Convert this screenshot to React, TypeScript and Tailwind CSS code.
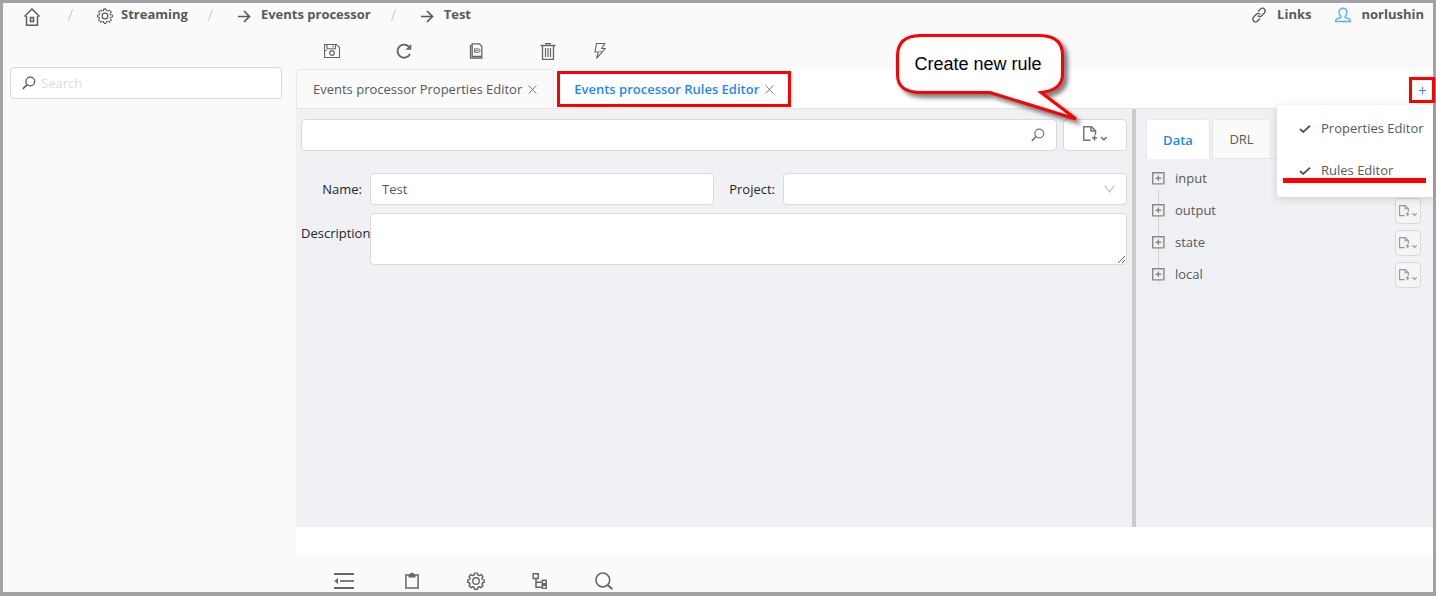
import type { ReactNode } from "react";

type DrawingProps = { className?: string; children: ReactNode; box?: string };

function Drawing({ className = "size-4", children, box = "0 0 16 16" }: DrawingProps) {
  return (
    <svg
      viewBox={box}
      className={`shrink-0 ${className}`}
      fill="none"
      stroke="currentColor"
      strokeWidth="1"
      aria-hidden="true"
    >
      {children}
    </svg>
  );
}

const HomeIcon = () => (
  <Drawing className="h-[18px] w-4" box="0 0 16 18">
    <path d="M.5 8.500 8 .9l7.500 7.600M2.500 8v9.300h11V8" strokeWidth="1.400" />
    <path d="M6.500 9.500h3v4h-3z" strokeWidth="1.500" />
  </Drawing>
);

const GEAR =
  "M6.700 1h2.600l.4 1.700 1.300.5 1.500-.9 1.700 1.700-.9 1.500.5 1.300 1.700.4v1.900l-1.700.4-.5 1.300.9 1.500-1.700 1.700-1.500-.9-1.300.5-.4 1.700H6.700l-.4-1.700-1.300-.5-1.500.9-1.700-1.700.9-1.500-.5-1.300L.6 9.100V7.200l1.600-.4.5-1.300-.9-1.500 1.700-1.700 1.500.9 1.300-.5z";

const GearIcon = ({ dashed = false, className = "size-4" }: { dashed?: boolean; className?: string }) => (
  <Drawing className={className}>
    <path d={GEAR} strokeWidth="1.300" strokeDasharray={dashed ? "2.200 .7" : undefined} strokeLinejoin="round" />
    <circle cx="8" cy="8" r="2.900" strokeWidth="1.200" />
  </Drawing>
);

const ArrowIcon = () => (
  <Drawing className="size-4">
    <path d="M1 8.500h11M7 3l5.500 5.500L7 14" strokeWidth="1.700" />
  </Drawing>
);

const LinkIcon = () => (
  <Drawing className="size-4">
    <path
      d="M7 4.500 9.500 2a2.600 2.600 0 0 1 4 .2c.9 1 .9 2.500 0 3.600L10.700 8.700a2.500 2.500 0 0 1-3.900-.2M9 11.500 6.500 14a2.600 2.600 0 0 1-4-.2c-.9-1-.9-2.500 0-3.600l2.800-2.900a2.500 2.500 0 0 1 3.900.2"
      strokeWidth="1.300"
    />
  </Drawing>
);

const UserIcon = () => (
  <Drawing className="size-4">
    <path
      d="M5.800 9.300C4.500 8.300 4 6.700 4 5.200 4 2.800 5.500 1.200 8 1.200s4 1.600 4 4c0 1.500-.5 3.100-1.800 4.100v1.200l4.300 1.700c.6.300.9.900.9 2.300H.6c0-1.400.3-2 .9-2.300l4.300-1.700z"
      strokeWidth="1.400"
    />
  </Drawing>
);

const SaveIcon = () => (
  <Drawing>
    <path d="M.6 1.500h11.900l3 3v10H.6zM3 1.500v4.200h8.500V1.500M9 2.500v2" strokeWidth="1.100" />
    <circle cx="8" cy="10" r="2.300" strokeWidth="1.200" />
    <path d="M.6 7.500h2" />
  </Drawing>
);

const ReloadIcon = () => (
  <Drawing>
    <path d="M13.300 4.300A6.500 6.500 0 1 0 14 10.800" strokeWidth="1.900" />
    <path d="M15.300 1v5.800H9.500z" fill="currentColor" stroke="none" />
  </Drawing>
);

const DocumentIcon = () => (
  <Drawing>
    <path d="M4.200.8h7.300l2.300 2.400v10.300H4.200zM4.200 2.700H2.500v12.500h11.300v-1.700" strokeWidth="1.300" />
    <path d="M6.500 5.800h3.800a1.800 1.800 0 0 1 0 3.600H6.500zM6 7.600h5" strokeWidth=".9" />
  </Drawing>
);

const TrashIcon = () => (
  <Drawing className="h-[17px] w-4" box="0 0 16 17">
    <path d="M.5 2.500h15M5 .6h6M2.500 3v13.400h11V3" strokeWidth="1.300" />
    <path d="M5.500 5v9M8 5v9M10.500 5v9" strokeWidth="1.200" />
  </Drawing>
);

const BoltIcon = () => (
  <Drawing className="h-[18px] w-3" box="0 0 12 18">
    <path d="M2.500 1.500h8.300L7.800 6.500h3.400L2.500 16.500 4.300 10H1z" strokeWidth="1.100" />
    <path d="M5 9.500h3.500L3.500 15" strokeWidth=".7" />
  </Drawing>
);

const CloseIcon = () => (
  <Drawing className="size-[9px]" box="0 0 9 9">
    <path d="m.7.500 7.600 8M8.300.5l-7.600 8" />
  </Drawing>
);

const LensIcon = ({ className = "size-4" }: { className?: string }) => (
  <Drawing className={className}>
    <circle cx="9.300" cy="6.500" r="4.400" strokeWidth="1.300" />
    <path d="m6.200 9.600-4.400 4.300" strokeWidth="1.500" />
  </Drawing>
);

const NewFileIcon = ({ className = "h-4 w-6" }: { className?: string }) => (
  <Drawing className={className} box="0 0 24 16">
    <path d="M7.500 14.200H.8V.8h7.700l4 4V9M8 .8V5h4.500" strokeWidth="1.500" />
    <path d="M11.500 9.500v5M9 12h5" strokeWidth="1.600" />
    <path d="m18 11 2.800 2.800 2.800-2.800" strokeWidth="1.600" />
  </Drawing>
);

const CheckIcon = () => (
  <Drawing className="size-3" box="0 0 12 12">
    <path d="m1 7 3.200 3L11 3.700" strokeWidth="1.900" />
  </Drawing>
);

const ExpandIcon = () => (
  <Drawing className="size-[13px]" box="0 0 13 13">
    <path d="M.7.700h11.200v11.200H.7z" fill="#f0f1f5" strokeWidth="1.400" />
    <path d="M6.300 3.500v5.600M3.500 6.300h5.600" strokeWidth="1.400" />
  </Drawing>
);

const OutdentIcon = () => (
  <Drawing className="h-[18px] w-5" box="0 0 20 18">
    <path d="M0 2h20M0 16h20" strokeWidth="2" />
    <path d="M6 9h14" strokeWidth="1.700" />
    <path d="M4 6v6L.3 9z" fill="currentColor" stroke="none" />
  </Drawing>
);

const ClipboardIcon = () => (
  <Drawing className="h-[18px] w-4" box="0 0 16 18">
    <path d="M1.900 3h12.200v13H1.900z" strokeWidth="1.500" />
    <path d="M4.500 2.500H6a2 2 0 0 1 4 0h1.500v3h-7z" fill="currentColor" stroke="none" />
  </Drawing>
);

const TreeIcon = () => (
  <Drawing>
    <path d="M1.200.8h5v4.700h-5zM4 5.500v8.700h6M4 9.200h6M10.300 7.200h3.900v3.500h-3.900zM10.300 12.300h3.900v3.100h-3.900z" strokeWidth="1.500" />
  </Drawing>
);

const FindIcon = () => (
  <Drawing className="size-[18px]" box="0 0 18 18">
    <circle cx="7.800" cy="8" r="6.900" strokeWidth="1.500" />
    <path d="m12.800 13 4.500 4.300" strokeWidth="1.900" />
  </Drawing>
);

function Crumb({ icon, text }: { icon: ReactNode; text: string }) {
  return (
    <a href="#" className="flex items-center gap-2 whitespace-nowrap">
      <span className="mt-1">{icon}</span>
      {text}
    </a>
  );
}

const Slash = () => (
  <svg viewBox="0 0 5 12" className="mt-px h-3 w-[5px] shrink-0 text-[#c4c4c4]" fill="none" stroke="currentColor" aria-hidden="true">
    <path d="M4.500 .5.5 11.500" />
  </svg>
);

const tools = [
  { label: "Save", icon: <SaveIcon />, width: "w-[72px]" },
  { label: "Reload", icon: <ReloadIcon />, width: "w-[72px]" },
  { label: "Copy ID", icon: <DocumentIcon />, width: "w-[72px]" },
  { label: "Delete", icon: <TrashIcon />, width: "w-[72px]" },
  { label: "Run", icon: <BoltIcon />, width: "w-8" },
];

const footerTools = [
  { label: "Collapse", icon: <OutdentIcon />, width: "w-8" },
  { label: "Clipboard", icon: <ClipboardIcon />, width: "w-6" },
  { label: "Settings", icon: <GearIcon className="size-[18px]" />, width: "w-6" },
  { label: "Structure", icon: <TreeIcon />, width: "w-6" },
  { label: "Find", icon: <FindIcon />, width: "w-6" },
];

const treeNodes = ["input", "output", "state", "local"];

const field = "rounded border border-[#d9d9d9] bg-white outline-none";

function Callout() {
  return (
    <div className="pointer-events-none absolute -top-[75px] right-[36px] z-20 h-[100px] w-[200px]">
      <svg viewBox="0 0 200 100" className="absolute inset-0 size-full" aria-hidden="true">
        <path
          d="M24 1.500H144Q166.500 2 166.500 21V41Q166 56 145 58.500L180 85L94 58.500H24Q1.500 58 1.500 41V21Q2 2 24 1.500Z"
          fill="#fff"
          stroke="#fe0000"
          strokeWidth="3"
          className="drop-shadow-[4px_4px_2px_rgba(0,0,0,0.5)]"
        />
      </svg>
      <p className="relative w-[164px] pt-[18px] text-center font-['Liberation_Sans',sans-serif] text-[18px] leading-6 text-black">
        Create new rule
      </p>
    </div>
  );
}

function ViewMenu() {
  return (
    <div className="absolute top-9 right-0 z-10 flex w-[156px] flex-col rounded-l bg-white pt-[2px] pb-[6px] shadow-[0_2px_8px_rgba(0,0,0,0.15)]">
      {["Properties Editor", "Rules Editor"].map((name) => (
        <button key={name} type="button" className="flex h-[42px] items-center gap-[10px] pl-[22px] whitespace-nowrap">
          <CheckIcon />
          {name}
        </button>
      ))}
      <div className="absolute top-[73px] right-[7px] left-[6px] h-[5px] bg-[#fe0000]" />
    </div>
  );
}

export default function App() {
  return (
    <div className="flex min-h-screen flex-col border-[3px] border-b-4 border-[#a3a3a3] bg-[#fafafa] font-['Open_Sans',sans-serif] text-[13px] leading-5 text-[#595959]">
      <header className="flex h-6 items-center justify-between pr-[9px] pb-[2px] pl-[21px] font-bold">
        <nav className="flex items-center" aria-label="Breadcrumb">
          <a href="#" aria-label="Home" className="mt-[5px] mr-7">
            <HomeIcon />
          </a>
          <Slash />
          <span className="mr-5 ml-6">
            <Crumb icon={<GearIcon dashed />} text="Streaming" />
          </span>
          <Slash />
          <span className="mr-5 ml-6">
            <Crumb icon={<ArrowIcon />} text="Events processor" />
          </span>
          <Slash />
          <span className="ml-6">
            <Crumb icon={<ArrowIcon />} text="Test" />
          </span>
        </nav>
        <div className="flex items-center gap-6">
          <a href="#" className="flex items-center gap-[10px]">
            <span className="mt-[2px]">
              <LinkIcon />
            </span>
            Links
          </a>
          <a href="#" className="flex items-center gap-[10px]">
            <span className="mt-[2px] text-[#54b4e4]">
              <UserIcon />
            </span>
            norlushin
          </a>
        </div>
      </header>

      <div className="flex flex-1">
        <aside className="w-[293px] shrink-0 pt-10 pr-[14px] pl-[7px]">
          <label className={`flex h-8 items-center gap-1 pl-[10px] ${field}`}>
            <LensIcon />
            <input
              type="search"
              aria-label="Search"
              placeholder="Search"
              className="min-w-0 flex-1 outline-none placeholder:text-[#dcdcdc]"
            />
          </label>
        </aside>

        <main className="flex min-w-0 flex-1 flex-col">
          <div className="flex h-[42px] items-center pt-[6px] text-[#666]">
            {tools.map((t) => (
              <button key={t.label} type="button" aria-label={t.label} className={`flex justify-center ${t.width}`}>
                {t.icon}
              </button>
            ))}
          </div>

          <div className="relative flex h-10 items-stretch justify-between border-b border-[#e4e4e4] bg-white">
            <div className="flex">
              <div className="flex items-center rounded-t border border-b-0 border-[#e8e8e8] bg-[#fafafa] px-4 whitespace-nowrap">
                <button type="button">Events processor Properties Editor</button>
                <button type="button" aria-label="Close Properties Editor" className="ml-[6px] text-[#777]">
                  <CloseIcon />
                </button>
              </div>
              <div className="mt-[2px] mb-px ml-[3px] flex items-center border-[3px] border-[#fe0000] bg-white px-[14px] font-semibold whitespace-nowrap text-[#1f87f5]">
                <button type="button">Events processor Rules Editor</button>
                <button type="button" aria-label="Close Rules Editor" className="ml-[6px] text-[#777]">
                  <CloseIcon />
                </button>
              </div>
            </div>
            <button
              type="button"
              aria-label="Add view"
              className="z-20 mt-2 -mr-[2px] flex h-[26px] w-[26px] items-center justify-center border-[3px] border-[#fe0000] bg-white text-[#3b8ff0]"
            >
              <Drawing className="size-[7px]" box="0 0 7 7">
                <path d="M3.500 0v7M0 3.500h7" />
              </Drawing>
            </button>
            <ViewMenu />
          </div>

          <div className="flex flex-1 bg-[#f0f1f5]">
            <section className="relative min-w-0 flex-1 px-[5px] pt-[10px]">
              <Callout />
              <div className="flex gap-[6px]">
                <label className={`flex h-8 flex-1 items-center pr-[10px] text-[#777] ${field}`}>
                  <input type="text" aria-label="Find rule" className="min-w-0 flex-1 px-3 outline-none" />
                  <LensIcon />
                </label>
                <button
                  type="button"
                  aria-label="Create new rule"
                  className={`flex h-8 w-16 items-center justify-center pb-[2px] text-[#777] ${field}`}
                >
                  <NewFileIcon />
                </button>
              </div>

              <form className="mt-[22px] grid grid-cols-2 gap-y-2">
                <div className="flex items-center">
                  <label htmlFor="name" className="w-[69px] shrink-0 pr-2 text-right text-[#262626]">
                    Name:
                  </label>
                  <input id="name" defaultValue="Test" className={`h-8 min-w-0 flex-1 px-[11px] ${field}`} />
                </div>
                <div className="flex items-center">
                  <label htmlFor="project" className="w-[69px] shrink-0 pr-2 text-right text-[#262626]">
                    Project:
                  </label>
                  <div className="relative flex min-w-0 flex-1">
                    <select id="project" className={`h-8 w-full appearance-none px-[11px] ${field}`}>
                      <option></option>
                    </select>
                    <span className="pointer-events-none absolute top-3 right-3 text-[#bbb]">
                      <Drawing className="h-2 w-[11px]" box="0 0 11 8">
                        <path d="m.7.500 4.800 6.500L10.300.5" strokeWidth="1.200" />
                      </Drawing>
                    </span>
                  </div>
                </div>
                <div className="col-span-2 flex items-start">
                  <label htmlFor="description" className="w-[69px] shrink-0 pt-[10px] text-[#262626]">
                    Description
                  </label>
                  <textarea id="description" className={`relative h-[52px] min-w-0 flex-1 px-[11px] ${field}`} />
                </div>
              </form>
            </section>

            <section className="w-[301px] shrink-0 border-l-4 border-[#cbcbcb] pt-[10px]">
              <div className="ml-[10px] flex h-10 gap-[2px] border-b border-[#e4e4e4]">
                <button type="button" className="-mb-px w-16 rounded-t border border-b-0 border-[#e8e8e8] bg-white font-semibold text-[#1f87f5]">
                  Data
                </button>
                <button type="button" className="w-[59px] rounded-t border border-b-0 border-[#e8e8e8] bg-[#fafafa]">
                  DRL
                </button>
              </div>
              <ul className="relative mt-[3px] pr-3 pl-4">
                <li aria-hidden="true" className="absolute top-7 bottom-[6px] left-[22px] w-px bg-[#d0d0d0]" />
                {treeNodes.map((node) => (
                  <li key={node} className="relative flex h-8 items-center">
                    <button type="button" aria-label={`Expand ${node}`} className="mr-[10px] text-[#888]">
                      <ExpandIcon />
                    </button>
                    <span className="flex-1">{node}</span>
                    <button
                      type="button"
                      aria-label={`Add to ${node}`}
                      className="mt-[2px] flex size-[26px] items-center justify-center rounded border border-[#d9d9d9] bg-[#f5f5f5] text-[#999]"
                    >
                      <NewFileIcon className="h-3 w-[18px]" />
                    </button>
                  </li>
                ))}
              </ul>
            </section>
          </div>

          <div className="h-[29px] bg-white" />
          <footer className="flex h-9 items-center gap-10 pt-[14px] pl-8 text-[#666]">
            {footerTools.map((t) => (
              <button key={t.label} type="button" aria-label={t.label} className={`flex justify-center ${t.width}`}>
                {t.icon}
              </button>
            ))}
          </footer>
        </main>
      </div>
    </div>
  );
}
